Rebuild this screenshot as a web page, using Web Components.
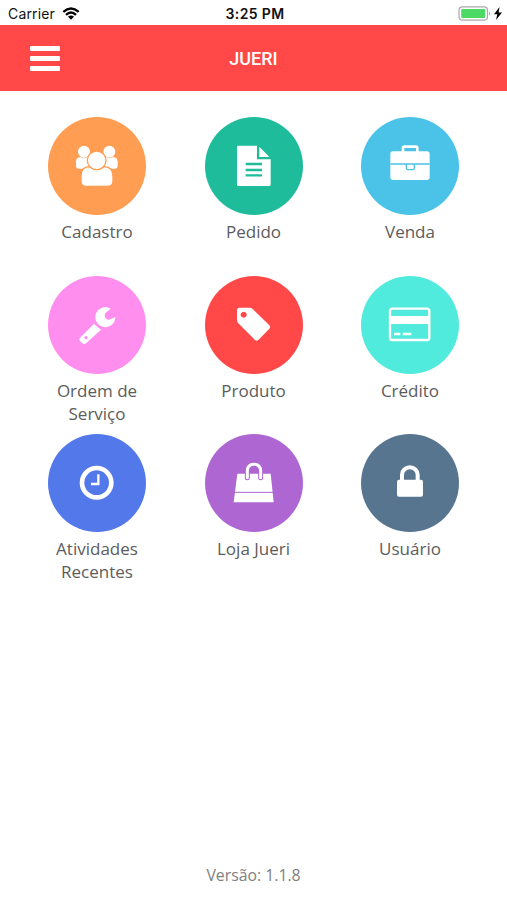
<!DOCTYPE html>
<html lang="pt-BR">
<head>
<meta charset="utf-8">
<title>Jueri</title>
<style>
  body {
    margin: 0;
    background: #fff;
    font-family: "Open Sans", "Noto Sans", sans-serif;
  }
</style>
</head>
<body>
<jueri-app>
  <menu-tile color="#ff9d52" label="Cadastro">
    <svg viewBox="0 0 294 294">
      <circle cx="108" cy="104" r="18"/><circle cx="184" cy="104" r="18"/>
      <path d="M97 120Q84 121 84 134V146Q84 155 93 155H128V128L120 120Q109 127 97 120zM195 120Q209 121 209 134V146Q209 155 200 155H165V128L173 120Q184 127 195 120z"/>
      <path stroke="#ff9d52" stroke-width="4" d="M123 149Q146 163 169 149Q195 150 195 178V192Q195 208 180 208H113Q99 208 99 192V178Q99 150 123 149z"/>
      <circle cx="146" cy="130" r="28" stroke="#ff9d52" stroke-width="4"/>
    </svg>
  </menu-tile>
  <menu-tile color="#1fbc9c" label="Pedido">
    <svg viewBox="0 0 294 294">
      <path d="M100 86H156V127H197V203Q197 207 193 207H100Q96 207 96 203V90Q96 86 100 86zM163 89L193 120H163z"/>
      <path stroke="#1fbc9c" stroke-width="7" d="M122 141H171M122 159H171M122 175H171"/>
    </svg>
  </menu-tile>
  <menu-tile color="#4bc2e8" label="Venda">
    <svg viewBox="0 0 294 294">
      <path fill="none" stroke="#fff" stroke-width="8" d="M126 106V93Q126 89 130 89H165Q169 89 169 93V106"/>
      <rect x="88" y="103" width="118" height="86" rx="8"/>
      <path stroke="#4bc2e8" stroke-width="4" d="M88 141H206M136 141V153Q136 158 141 158H155Q160 158 160 153V141"/>
    </svg>
  </menu-tile>
  <menu-tile color="#ff8eef" label="Ordem de Serviço">
    <svg viewBox="0 0 294 294">
      <path d="M188 98A30 30 0 1 0 202 123L184 131Q177 132 172 126Q167 118 172 111z"/>
      <path d="M138 143L159 161L114 202Q108 207 103 202L96 195Q91 189 98 184z"/>
      <path fill="none" stroke="#ff8eef" stroke-width="3" d="M140 140Q146 154 162 159"/>
      <circle cx="114" cy="185" r="5" fill="#ff8eef"/>
    </svg>
  </menu-tile>
  <menu-tile color="#ff4847" label="Produto">
    <svg viewBox="0 0 294 294">
      <path fill-rule="evenodd" d="M103 95H133Q139 95 143 99L193 148Q198 153 193 158L160 192Q155 197 150 192L100 142Q96 138 96 132V102Q96 95 103 95zM116 107a9 9 0 1 0 .1 0z"/>
    </svg>
  </menu-tile>
  <menu-tile color="#50ebdd" label="Crédito">
    <svg viewBox="0 0 294 294">
      <rect x="87" y="98" width="118" height="94" rx="7" fill="none" stroke="#fff" stroke-width="7"/>
      <path d="M85 120H207V144H85zM99 170H118V178H99zM125 170H151V178H125z"/>
    </svg>
  </menu-tile>
  <menu-tile color="#5278ea" label="Atividades Recentes">
    <svg viewBox="0 0 294 294" fill="none" stroke="#fff">
      <circle cx="146" cy="146" r="44" stroke-width="14"/>
      <path stroke-width="7" d="M151 121V150H129"/>
    </svg>
  </menu-tile>
  <menu-tile color="#ae66d2" label="Loja Jueri">
    <svg viewBox="0 0 294 294">
      <path d="M97 119H197L206 205H86z"/>
      <path stroke="#ae66d2" stroke-width="3" d="M86 175H206"/>
      <path fill="none" stroke="#ae66d2" stroke-width="15" stroke-linecap="round" d="M127 131V112Q127 91 147 91Q167 91 167 112V131"/>
      <path fill="none" stroke="#fff" stroke-width="9" stroke-linecap="round" d="M127 131V112Q127 91 147 91Q167 91 167 112V131"/>
    </svg>
  </menu-tile>
  <menu-tile color="#587590" label="Usuário">
    <svg viewBox="0 0 294 294">
      <rect x="108" y="137" width="78" height="51" rx="6"/>
      <path fill="none" stroke="#fff" stroke-width="12" d="M123 140V122A23.500 22 0 0 1 170 122V140"/>
    </svg>
  </menu-tile>
</jueri-app>

<script>
class StatusBar extends HTMLElement {
  constructor() {
    super();
    this.attachShadow({ mode: 'open' });
    this.shadowRoot.innerHTML = `
      <style>
        :host {
          display: grid;
          grid-template-columns: 1fr auto 1fr;
          align-items: center;
          height: 25px;
          padding: 2px 5px 0 8px;
          box-sizing: border-box;
          font: 14px/20px Inter, sans-serif;
          color: #111;
        }
        div { display: flex; align-items: center; }
        .carrier { gap: 7px; letter-spacing: 0.15px; }
        .time { font-weight: 600; letter-spacing: 0.35px; }
        .power { justify-content: flex-end; gap: 3px; }
        svg { display: block; }
      </style>
      <div class="carrier">
        <span>Carrier</span>
        <svg width="18" height="13" viewBox="0 0 18 13" fill="none" stroke="#000" stroke-width="2.300">
          <path d="M1.300 4.800Q9-1.800 16.700 4.800M4 7.800Q9 3.300 14 7.800"/>
          <path fill="#000" stroke="none" d="M6 9.600Q9 7.400 12 9.600L9 12.800z"/>
        </svg>
      </div>
      <div class="time">3:25 PM</div>
      <div class="power">
        <svg width="33" height="15" viewBox="0 0 33 15">
          <rect x="1" y=".8" width="28.500" height="13.400" rx="3.500" fill="#fff" stroke="#aaa" stroke-width="1.200"/>
          <rect x="3.200" y="3" width="24" height="9" rx="1" fill="#4cd964"/>
          <path d="M31 5Q33 7.500 31 10z" fill="#aaa"/>
        </svg>
        <svg width="8" height="13" viewBox="0 0 8 13"><path d="M5.500 0L0 7.200H3.300L2 13L8 5.400H4.600z"/></svg>
      </div>
    `;
  }
}

class AppHeader extends HTMLElement {
  constructor() {
    super();
    this.attachShadow({ mode: 'open' });
    this.shadowRoot.innerHTML = `
      <style>
        :host {
          display: grid;
          grid-template-columns: 1fr auto 1fr;
          align-items: center;
          height: 66px;
          padding: 0 30px;
          background: #ff4847;
          color: #fff;
          font: 500 18px/24px Roboto, sans-serif;
        }
        button {
          display: flex;
          flex-direction: column;
          gap: 5px;
          width: 30px;
          padding: 0;
          border: 0;
          background: none;
        }
        i { height: 5px; width: 30px; border-radius: 1px; background: #fff; }
        .title { padding-top: 2px; }
      </style>
      <button aria-label="Menu"><i></i><i></i><i></i></button>
      <div class="title"><slot></slot></div>
    `;
  }
}

class MenuTile extends HTMLElement {
  constructor() {
    super();
    this.attachShadow({ mode: 'open' });
    this.shadowRoot.innerHTML = `
      <style>
        :host {
          display: flex;
          flex-direction: column;
          align-items: center;
          color: #5c5c5c;
          font-size: 17px;
          line-height: 23px;
          text-align: center;
        }
        .circle {
          width: 98px;
          height: 98px;
          border-radius: 50%;
          fill: #fff;
        }
        ::slotted(svg) { display: block; width: 98px; height: 98px; }
        .label { width: 98px; margin-top: 5px; }
      </style>
      <div class="circle"><slot></slot></div>
      <div class="label"></div>
    `;
  }

  connectedCallback() {
    this.shadowRoot.querySelector('.circle').style.background = this.getAttribute('color');
    this.shadowRoot.querySelector('.label').textContent = this.getAttribute('label');
  }
}

class JueriApp extends HTMLElement {
  constructor() {
    super();
    this.attachShadow({ mode: 'open' });
    this.shadowRoot.innerHTML = `
      <style>
        :host {
          display: flex;
          flex-direction: column;
          height: 900px;
        }
        main {
          display: grid;
          grid-template-columns: repeat(3, 156.500px);
          grid-auto-rows: 158.800px;
          justify-content: center;
          flex: 1;
          align-content: start;
          padding-top: 25.800px;
        }
        footer {
          padding-bottom: 14px;
          color: #808080;
          font-size: 15.800px;
          line-height: 22px;
          text-align: center;
        }
      </style>
      <status-bar></status-bar>
      <app-header>JUERI</app-header>
      <main><slot></slot></main>
      <footer>Versão: 1.1.8</footer>
    `;
  }
}

customElements.define('status-bar', StatusBar);
customElements.define('app-header', AppHeader);
customElements.define('menu-tile', MenuTile);
customElements.define('jueri-app', JueriApp);
</script>
</body>
</html>
